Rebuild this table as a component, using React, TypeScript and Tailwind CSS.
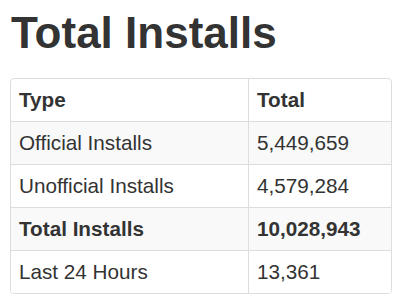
import React from "react";

const rows: { type: string; total: string; bold?: boolean; striped?: boolean }[] = [
  { type: "Official Installs", total: "5,449,659", striped: true },
  { type: "Unofficial Installs", total: "4,579,284" },
  { type: "Total Installs", total: "10,028,943", bold: true, striped: true },
  { type: "Last 24 Hours", total: "13,361" },
];

export default function App() {
  return (
    <div className="w-[400px] h-[303px] bg-white px-[10px] pt-[9px] text-[#333]" style={{ fontFamily: '"Liberation Sans", Arial, sans-serif' }}>
      <h1 className="text-[44px] font-bold leading-[48px] ml-[1px]">Total Installs</h1>
      <div className="mt-[21px] w-[382px] border border-[#ddd] rounded-[4px] overflow-hidden text-[20.7px] leading-[26px]">
        <div className="grid grid-cols-[238px_1fr] font-bold">
          <div className="px-[8px] py-[8px] border-r border-[#ddd]">Type</div>
          <div className="px-[8px] py-[8px]">Total</div>
        </div>
        {rows.map((r) => (
          <div
            key={r.type}
            className={`grid grid-cols-[238px_1fr] border-t border-[#ddd] ${r.striped ? "bg-[#f9f9f9]" : "bg-white"} ${r.bold ? "font-bold" : ""}`}
          >
            <div className="px-[8px] py-[8px] border-r border-[#ddd]">{r.type}</div>
            <div className="px-[8px] py-[8px]">{r.total}</div>
          </div>
        ))}
      </div>
    </div>
  );
}
